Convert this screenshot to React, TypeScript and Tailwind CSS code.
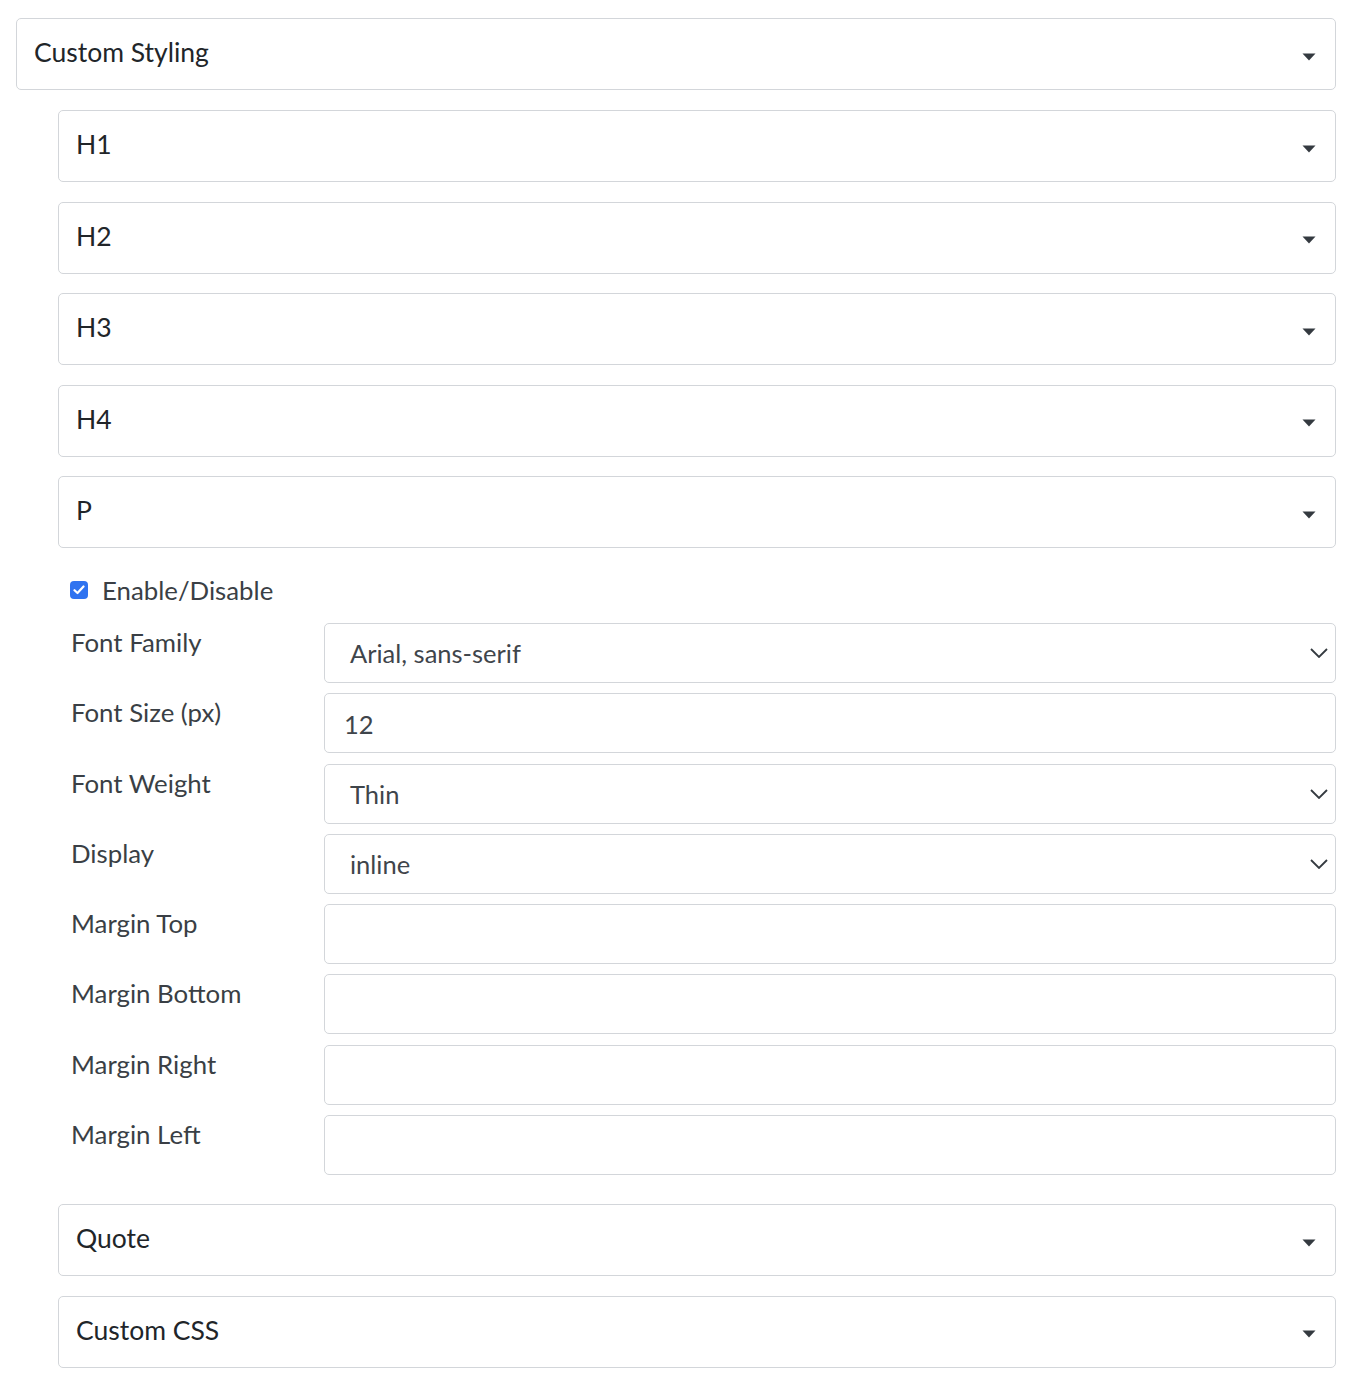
const font = { fontFamily: 'Lato, "Noto Sans", sans-serif' };

const sections = ["H1", "H2", "H3", "H4", "P"];

const fields = [
  { label: "Font Family", kind: "select", value: "Arial, sans-serif" },
  { label: "Font Size (px)", kind: "input", value: "12" },
  { label: "Font Weight", kind: "select", value: "Thin" },
  { label: "Display", kind: "select", value: "inline" },
  { label: "Margin Top", kind: "input", value: "" },
  { label: "Margin Bottom", kind: "input", value: "" },
  { label: "Margin Right", kind: "input", value: "" },
  { label: "Margin Left", kind: "input", value: "" },
];

function Caret() {
  return (
    <svg width="14" height="8" viewBox="0 0 14 8" className="mt-[5px] mr-[19px] shrink-0">
      <path d="M0.5 0.5 H13.5 L7 7.5 Z" fill="#343a40" />
    </svg>
  );
}

function Chevron() {
  return (
    <svg width="18" height="10" viewBox="0 0 18 10" className="absolute right-[7px] top-1/2 -translate-y-1/2">
      <path d="M1 1 L9 9 L17 1" fill="none" stroke="#343a40" strokeWidth="1.8" />
    </svg>
  );
}

function Toggle({ title }: { title: string }) {
  return (
    <div className="flex h-[72px] items-center justify-between rounded-[5px] border border-[#d3d6da] bg-white pl-[17px] text-[26.5px] text-[#212529]">
      <span className="pb-[2px]">{title}</span>
      <Caret />
    </div>
  );
}

function Field({ label, kind, value }: { label: string; kind: string; value: string }) {
  return (
    <div className="flex">
      <div className="w-[266px] shrink-0 pl-[13px] text-[25.8px] leading-[38px] text-[#3a3f45]">
        {label}
      </div>
      <div className="relative flex h-[60px] flex-1 items-center rounded-[5px] border border-[#d3d6da] bg-white text-[25.5px] text-[#3f454b]">
        {kind === "select" ? (
          <>
            <span className="pl-[25px] pt-[1px]">{value}</span>
            <Chevron />
          </>
        ) : (
          <span className="pl-[19px] pt-[1px]">{value}</span>
        )}
      </div>
    </div>
  );
}

export default function App() {
  return (
    <div className="min-h-screen bg-white pl-4 pr-[22px] pt-[18px]" style={font}>
      <Toggle title="Custom Styling" />

      <div className="mt-5 flex flex-col gap-[19.5px] pl-[42px]">
        {sections.map((s) => (
          <Toggle key={s} title={s} />
        ))}
      </div>

      <div className="pl-[42px]">
        <label className="mt-[26px] flex items-center gap-[14px] pl-[12px] text-[25.8px] leading-[32px] text-[#3a3f45]">
          <span className="flex h-[18px] w-[18px] items-center justify-center rounded-[4px] bg-[#2f73f0]">
            <svg width="12" height="10" viewBox="0 0 12 10">
              <path d="M1.5 5.2 L4.5 8 L10.5 1.5" fill="none" stroke="white" strokeWidth="2.2" strokeLinecap="round" strokeLinejoin="round" />
            </svg>
          </span>
          Enable/Disable
        </label>

        <div className="mt-[17px] flex flex-col gap-[10.3px]">
          {fields.map((f) => (
            <Field key={f.label} {...f} />
          ))}
        </div>

        <div className="mt-[29px] flex flex-col gap-[19.5px] pb-5">
          <Toggle title="Quote" />
          <Toggle title="Custom CSS" />
        </div>
      </div>
    </div>
  );
}
